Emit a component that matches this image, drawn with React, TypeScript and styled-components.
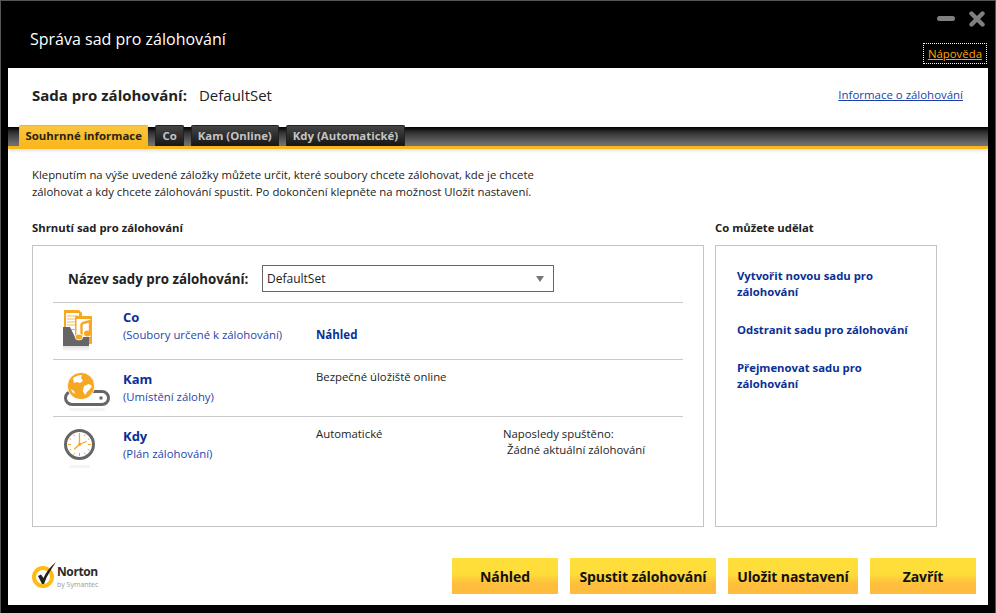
import React from 'react';
import styled, { createGlobalStyle } from 'styled-components';

const GlobalStyle = createGlobalStyle`
	html, body {
		margin: 0;
		padding: 0;
		background: #000;
		font-family: 'Open Sans', 'Noto Sans', sans-serif;
	}
`;

const Frame = styled.div`
	box-sizing: border-box;
	width: 996px;
	height: 613px;
	background: #000;
	border: 1px solid #555;
	border-bottom: 0;
	padding: 0 7px 8px 7px;
	display: flex;
	flex-direction: column;
	overflow: hidden;
`;

const TitleBar = styled.div`
	height: 67px;
	flex: none;
	display: flex;
	justify-content: space-between;
	padding-left: 22px;
`;

const Title = styled.h1`
	margin: 26px 0 0;
	font-size: 16px;
	line-height: 24px;
	font-weight: 400;
	color: #fff;
`;

const TitleRight = styled.div`
	display: flex;
	flex-direction: column;
	align-items: flex-end;
	padding-top: 10px;
`;

const WindowControls = styled.div`
	display: flex;
	align-items: center;
	gap: 14px;
	margin-bottom: 16px;
	margin-right: 3px;
`;

const HelpLink = styled.a`
	display: block;
	box-sizing: border-box;
	height: 21px;
	padding: 0 4px;
	margin-right: 1px;
	border: 1px dotted #fff;
	color: #ffa800;
	font-size: 11.4px;
	line-height: 19px;
	text-decoration: underline;
`;

const Sheet = styled.div`
	flex: 1;
	background: #fff;
	display: flex;
	flex-direction: column;
`;

const SetHeader = styled.div`
	height: 59px;
	flex: none;
	padding: 0 25px 0 24px;
	display: flex;
	align-items: center;
	justify-content: space-between;
`;

const SetName = styled.div`
	display: flex;
	align-items: baseline;
	gap: 12px;
	color: #222;
	font-size: 15px;
	margin-top: -5px;
`;

const SetLabel = styled.strong`
	font-weight: 700;
`;

const InfoLink = styled.a`
	color: #1a3fa8;
	font-size: 11.45px;
	text-decoration: underline;
	margin-top: -6px;
`;

const TabBar = styled.div`
	height: 22px;
	flex: none;
	box-sizing: border-box;
	padding-left: 11px;
	display: flex;
	align-items: flex-end;
	gap: 7px;
	background: linear-gradient(#000, #333 30%, #6e6e6e 90%);
	border-bottom: 3px solid #f8b71c;
	box-shadow: 0 2px 3px rgba(0, 0, 0, 0.12);
`;

const Tab = styled.div<{ $active?: boolean }>`
	height: 21px;
	padding: 0 ${(p) => (p.$active ? '5.5px' : '6px')};
	box-sizing: border-box;
	border-radius: 2px 2px 0 0;
	font-size: 11.4px;
	line-height: 20px;
	font-weight: 700;
	white-space: nowrap;
	color: ${(p) => (p.$active ? '#2a2410' : '#c4c4c4')};
	background: ${(p) => (p.$active ? 'linear-gradient(#fbc63f, #f8b71c)' : 'linear-gradient(#444, #161616)')};
	border: 1px solid ${(p) => (p.$active ? '#f8b71c' : '#222')};
	border-bottom: 0;
`;

const Content = styled.div`
	flex: none;
	padding: 17px 24px 0 24px;
	display: flex;
	flex-direction: column;
`;

const Intro = styled.p`
	margin: 0;
	font-size: 11.35px;
	line-height: 17px;
	color: #222;
`;

const Columns = styled.div`
	display: grid;
	grid-template-columns: 672px 222px;
	column-gap: 11px;
	margin-top: 20px;
`;

const Column = styled.section`
	display: flex;
	flex-direction: column;
`;

const SectionTitle = styled.h2`
	margin: 0 0 9px;
	font-size: 11.3px;
	line-height: 16px;
	font-weight: 700;
	color: #222;
`;

const Panel = styled.div`
	box-sizing: border-box;
	height: 282px;
	border: 1px solid #c4c4c4;
`;

const SummaryPanel = styled(Panel)`
	padding: 19px 20px 0 20px;
`;

const NameRow = styled.div`
	display: flex;
	align-items: center;
	height: 27px;
	padding-left: 15px;
	margin-bottom: 10px;
`;

const NameLabel = styled.label`
	width: 194px;
	font-size: 13.3px;
	font-weight: 700;
	color: #222;
`;

const FakeSelect = styled.div`
	box-sizing: border-box;
	width: 292px;
	height: 27px;
	border: 1px solid #666;
	padding: 0 9px 0 4px;
	display: flex;
	align-items: center;
	justify-content: space-between;
	font-size: 12px;
	color: #222;
`;

const Caret = styled.span`
	width: 0;
	height: 0;
	border-left: 4px solid transparent;
	border-right: 4px solid transparent;
	border-top: 6px solid #777;
`;

const Row = styled.div`
	display: grid;
	grid-template-columns: 70px 193px 187px 1fr;
	height: 57px;
	box-sizing: border-box;
	border-top: 1px solid #c9c9c9;
`;

const IconCell = styled.div`
	padding: 5px 0 0 8px;
`;

const WhatCell = styled.div<{ $top: number }>`
	padding-top: ${(p) => p.$top}px;
`;

const RowTitle = styled.div`
	font-size: 13px;
	line-height: 16px;
	font-weight: 700;
	color: #0a2f96;
`;

const RowSub = styled.div`
	margin-top: 2px;
	font-size: 11.35px;
	line-height: 16px;
	color: #1f45ad;
`;

const ValueCell = styled.div<{ $top: number; $bold?: boolean }>`
	padding-top: ${(p) => p.$top}px;
	font-size: ${(p) => (p.$bold ? '11.5px' : '11.35px')};
	font-weight: ${(p) => (p.$bold ? 700 : 400)};
	line-height: 16px;
	color: ${(p) => (p.$bold ? '#0a2f96' : '#222')};
`;

const LastRunValue = styled.div`
	padding-left: 4px;
`;

const ActionsPanel = styled(Panel)`
	padding: 22px 20px 0 21px;
	display: flex;
	flex-direction: column;
	gap: 22px;
`;

const ActionLink = styled.a`
	font-size: 11.3px;
	line-height: 16px;
	font-weight: 700;
	color: #0a2f96;
`;

const Footer = styled.div`
	flex: 1;
	display: flex;
	align-items: flex-end;
	justify-content: space-between;
	padding: 0 12px 11px 24px;
`;

const Logo = styled.div`
	display: flex;
	align-items: flex-start;
	margin-bottom: 4px;
`;

const LogoText = styled.div`
	display: flex;
	flex-direction: column;
	padding-top: 2px;
`;

const LogoName = styled.span`
	font-size: 12px;
	line-height: 16px;
	font-weight: 700;
	color: #2b2b2b;
	letter-spacing: -0.4px;
`;

const LogoBy = styled.span`
	font-size: 7px;
	line-height: 10px;
	color: #9a9a9a;
`;

const Buttons = styled.div`
	display: flex;
	gap: 12px;
`;

const ActionButton = styled.button<{ $width: number }>`
	width: ${(p) => p.$width}px;
	height: 36px;
	border: 0;
	padding: 0;
	font-family: inherit;
	font-size: 14px;
	font-weight: 700;
	color: #111;
	letter-spacing: -0.1px;
	background: linear-gradient(#ffdf3a 0%, #ffdc3a 45%, #febe3c 72%, #febb3c 100%);
`;

const MinimizeIcon = () => (
	<svg width="18" height="8" viewBox="0 0 18 8">
		<rect x="0" y="1" width="18" height="5" rx="2.5" fill="#808080" />
	</svg>
);

const CloseIcon = () => (
	<svg width="16" height="16" viewBox="0 0 16 16">
		<path d="M2.5 2.5 L13.5 13.5 M13.5 2.5 L2.5 13.5" stroke="#808080" strokeWidth="4.4" strokeLinecap="round" />
	</svg>
);

const WhatIcon = () => (
	<svg width="34" height="48" viewBox="0 0 34 48">
		<defs>
			<linearGradient id="folderShine" x1="0" y1="0" x2="0" y2="1">
				<stop offset="0" stopColor="#e2e2e2" />
				<stop offset="1" stopColor="#fff" />
			</linearGradient>
		</defs>
		<path d="M3 2h15l3 3v17H3z" fill="#f7a823" />
		<rect x="5" y="5" width="13" height="16" fill="#fff" />
		<path d="M6 8h11M6 11h11M6 14h11M6 17h11" stroke="#f3b75a" strokeWidth="1" />
		<rect x="14" y="8" width="17" height="28" rx="1" fill="#f7a823" />
		<rect x="15.5" y="11" width="14" height="18" fill="#fff" />
		<path d="M2 19h7l5 10h14v9H2z" fill="#666" />
		<path d="M20.5 15.5l8.5-2.5v12M20.5 15.5v13" fill="none" stroke="#f7a823" strokeWidth="2.4" />
		<ellipse cx="18" cy="29" rx="3.8" ry="3" fill="#f7a823" stroke="#fff" strokeWidth="0.8" />
		<ellipse cx="26.5" cy="25.5" rx="3.6" ry="2.9" fill="#f7a823" />
		<rect x="2" y="38" width="26" height="6" fill="url(#folderShine)" />
	</svg>
);

const WhereIcon = () => (
	<svg width="52" height="50" viewBox="0 0 52 50">
		<rect x="4.5" y="26.5" width="43" height="13" rx="6.5" fill="#fff" stroke="#666" strokeWidth="3" />
		<rect x="38.5" y="31.5" width="3" height="3" fill="#666" />
		<circle cx="20" cy="21" r="13.6" fill="#f7a823" stroke="#fff" strokeWidth="0.8" />
		<path d="M12 13c3-2 6-3 9-3l-1 3 2 3-3 2-3-1-3 1zM23 21l5-2 3 2-2 3-3 3-2 3-2-4zM10 24l3 2 1 3-3-2z" fill="#fff" />
		<rect x="8" y="43" width="36" height="3" rx="1.5" fill="#f4f4f4" />
	</svg>
);

const WhenIcon = () => (
	<svg width="38" height="50" viewBox="0 0 38 50">
		<circle cx="18.5" cy="22.5" r="14" fill="#fff" stroke="#666" strokeWidth="3" />
		<path d="M18.5 11v3M18.5 31v3M7 22.5h3M27 22.5h3M12.7 12.5l1 1.7M24.3 12.5l-1 1.7M8.5 16.7l1.7 1M28.5 16.7l-1.7 1M8.5 28.3l1.7-1M28.5 28.3l-1.7-1M12.7 32.5l1-1.7M24.3 32.5l-1-1.7" stroke="#f7a823" strokeWidth="1" />
		<path d="M18.5 22.5V12.5M18.5 22.5l6.5-3M18.5 22.5l-5 4.5" stroke="#f7a823" strokeWidth="1.3" strokeLinecap="round" />
		<circle cx="18.5" cy="22.5" r="1.6" fill="#f7a823" />
		<rect x="8" y="43" width="21" height="3" rx="1.5" fill="#f4f4f4" />
	</svg>
);

const NortonMark = () => (
	<svg width="25" height="27" viewBox="0 0 25 27">
		<circle cx="11" cy="15" r="9" fill="#fff" stroke="#fdbb13" strokeWidth="4" />
		<path d="M6 14L9 12.5L11.5 16C14 10 18 5 24 0C20 6 15 13 12 22L10 22Z" fill="#222" />
	</svg>
);

const App = () => {
	return (
		<Frame>
			<GlobalStyle />
			<TitleBar>
				<Title>Správa sad pro zálohování</Title>
				<TitleRight>
					<WindowControls>
						<MinimizeIcon />
						<CloseIcon />
					</WindowControls>
					<HelpLink>Nápověda</HelpLink>
				</TitleRight>
			</TitleBar>
			<Sheet>
				<SetHeader>
					<SetName>
						<SetLabel>Sada pro zálohování:</SetLabel>
						<span>DefaultSet</span>
					</SetName>
					<InfoLink>Informace o zálohování</InfoLink>
				</SetHeader>
				<TabBar>
					<Tab $active>Souhrnné informace</Tab>
					<Tab>Co</Tab>
					<Tab>Kam (Online)</Tab>
					<Tab>Kdy (Automatické)</Tab>
				</TabBar>
				<Content>
					<Intro>
						Klepnutím na výše uvedené záložky můžete určit, které soubory chcete zálohovat, kde je chcete
						<br />
						zálohovat a kdy chcete zálohování spustit. Po dokončení klepněte na možnost Uložit nastavení.
					</Intro>
					<Columns>
						<Column>
							<SectionTitle>Shrnutí sad pro zálohování</SectionTitle>
							<SummaryPanel>
								<NameRow>
									<NameLabel>Název sady pro zálohování:</NameLabel>
									<FakeSelect>
										DefaultSet
										<Caret />
									</FakeSelect>
								</NameRow>
								<Row>
									<IconCell><WhatIcon /></IconCell>
									<WhatCell $top={6}>
										<RowTitle>Co</RowTitle>
										<RowSub>(Soubory určené k zálohování)</RowSub>
									</WhatCell>
									<ValueCell $top={24} $bold>Náhled</ValueCell>
									<div />
								</Row>
								<Row>
									<IconCell><WhereIcon /></IconCell>
									<WhatCell $top={11}>
										<RowTitle>Kam</RowTitle>
										<RowSub>(Umístění zálohy)</RowSub>
									</WhatCell>
									<ValueCell $top={9}>Bezpečné úložiště online</ValueCell>
									<div />
								</Row>
								<Row>
									<IconCell><WhenIcon /></IconCell>
									<WhatCell $top={11}>
										<RowTitle>Kdy</RowTitle>
										<RowSub>(Plán zálohování)</RowSub>
									</WhatCell>
									<ValueCell $top={9}>Automatické</ValueCell>
									<ValueCell $top={9}>
										Naposledy spuštěno:
										<LastRunValue>Žádné aktuální zálohování</LastRunValue>
									</ValueCell>
								</Row>
							</SummaryPanel>
						</Column>
						<Column>
							<SectionTitle>Co můžete udělat</SectionTitle>
							<ActionsPanel>
								<ActionLink>Vytvořit novou sadu pro<br />zálohování</ActionLink>
								<ActionLink>Odstranit sadu pro zálohování</ActionLink>
								<ActionLink>Přejmenovat sadu pro<br />zálohování</ActionLink>
							</ActionsPanel>
						</Column>
					</Columns>
				</Content>
				<Footer>
					<Logo>
						<NortonMark />
						<LogoText>
							<LogoName>Norton</LogoName>
							<LogoBy>by Symantec</LogoBy>
						</LogoText>
					</Logo>
					<Buttons>
						<ActionButton $width={106}>Náhled</ActionButton>
						<ActionButton $width={146}>Spustit zálohování</ActionButton>
						<ActionButton $width={130}>Uložit nastavení</ActionButton>
						<ActionButton $width={106}>Zavřít</ActionButton>
					</Buttons>
				</Footer>
			</Sheet>
		</Frame>
	);
};

export default App;
